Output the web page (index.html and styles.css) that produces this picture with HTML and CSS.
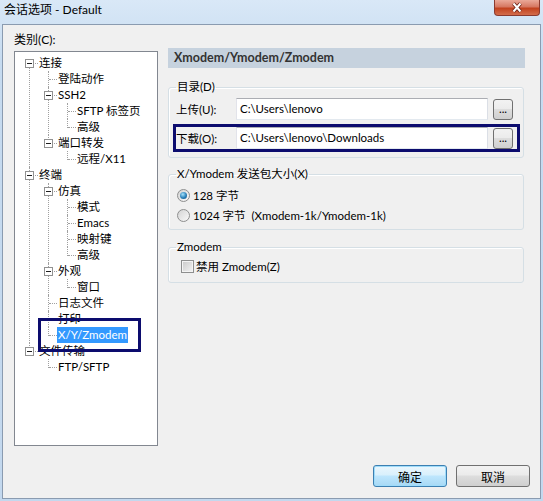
FILE: index.html
```html
<!DOCTYPE html>
<html lang="zh-CN">
<head>
    <meta charset="UTF-8">
    <title>会话选项 - Default</title>
    <link rel="stylesheet" href="styles.css">
</head>
<body>

    <div class="window">
        <div class="titlebar">
            <span class="title">会话选项 - Default</span>
            <button class="close" type="button">
                <svg width="14" height="11" viewBox="0 0 14 11">
                    <path d="M3.5 1.5 L10.5 9.5 M10.5 1.5 L3.5 9.5" stroke="#6b2216" stroke-width="3.6" fill="none"/>
                    <path d="M3.5 1.5 L10.5 9.5 M10.5 1.5 L3.5 9.5" stroke="#fff" stroke-width="2" fill="none"/>
                </svg>
            </button>
        </div>

        <div class="client">
            <div class="main">
                <div class="category">
                    <div class="cat-label">类别(C):</div>
                    <div class="tree">
                        <ul>
                            <li><span class="box"></span><div class="row"><span class="txt">连接</span></div>
                                <ul>
                                    <li><div class="row"><span class="txt">登陆动作</span></div></li>
                                    <li><span class="box"></span><div class="row"><span class="txt">SSH2</span></div>
                                        <ul>
                                            <li><div class="row"><span class="txt">SFTP 标签页</span></div></li>
                                            <li><div class="row"><span class="txt">高级</span></div></li>
                                        </ul>
                                    </li>
                                    <li><span class="box"></span><div class="row"><span class="txt">端口转发</span></div>
                                        <ul>
                                            <li><div class="row"><span class="txt">远程/X11</span></div></li>
                                        </ul>
                                    </li>
                                </ul>
                            </li>
                            <li><span class="box"></span><div class="row"><span class="txt">终端</span></div>
                                <ul>
                                    <li><span class="box"></span><div class="row"><span class="txt">仿真</span></div>
                                        <ul>
                                            <li><div class="row"><span class="txt">模式</span></div></li>
                                            <li><div class="row"><span class="txt">Emacs</span></div></li>
                                            <li><div class="row"><span class="txt">映射键</span></div></li>
                                            <li><div class="row"><span class="txt">高级</span></div></li>
                                        </ul>
                                    </li>
                                    <li><span class="box"></span><div class="row"><span class="txt">外观</span></div>
                                        <ul>
                                            <li><div class="row"><span class="txt">窗口</span></div></li>
                                        </ul>
                                    </li>
                                    <li><div class="row"><span class="txt">日志文件</span></div></li>
                                    <li><div class="row"><span class="txt">打印</span></div></li>
                                    <li><div class="row"><span class="txt sel">X/Y/Zmodem</span></div><span class="mark"></span></li>
                                </ul>
                            </li>
                            <li><span class="box"></span><div class="row"><span class="txt">文件传输</span></div>
                                <ul>
                                    <li><div class="row"><span class="txt">FTP/SFTP</span></div></li>
                                </ul>
                            </li>
                        </ul>
                    </div>
                </div>

                <div class="panel">
                    <div class="panel-head">Xmodem/Ymodem/Zmodem</div>

                    <fieldset class="group g1">
                        <legend>目录(D)</legend>
                        <div class="dir-row">
                            <span class="dir-label">上传(U):</span>
                            <div class="path">C:\Users\lenovo</div>
                            <button class="browse" type="button">...</button>
                        </div>
                        <div class="dir-row">
                            <span class="dir-label">下载(O):</span>
                            <div class="path">C:\Users\lenovo\Downloads</div>
                            <button class="browse" type="button">...</button>
                            <span class="mark mark-row"></span>
                        </div>
                    </fieldset>

                    <fieldset class="group g2">
                        <legend>X/Ymodem 发送包大小(X)</legend>
                        <div class="opt"><span class="radio on"></span>128 字节</div>
                        <div class="opt"><span class="radio"></span>1024 字节&nbsp;&nbsp;(Xmodem-1k/Ymodem-1k)</div>
                    </fieldset>

                    <fieldset class="group g3">
                        <legend>Zmodem</legend>
                        <div class="opt"><span class="check"></span>禁用 Zmodem(Z)</div>
                    </fieldset>
                </div>
            </div>

            <div class="footer">
                <button class="btn default" type="button">确定</button>
                <button class="btn" type="button">取消</button>
            </div>
        </div>
    </div>

</body>
</html>
```

FILE: styles.css
```css
* {
    box-sizing: border-box;
}
body {
    margin: 0;
    font-family: Lato, "Noto Sans CJK SC", sans-serif;
    font-size: 11.5px;
    color: #000;
}
button {
    font: inherit;
    color: #000;
}
.window {
    width: 543px;
    height: 501px;
    display: flex;
    flex-direction: column;
    background: linear-gradient(#d9e8f7, #c6dbf0 60px, #c3d8ee);
    overflow: hidden;
}
.titlebar {
    height: 24px;
    display: flex;
    align-items: flex-start;
}
.title {
    padding: 2px 0 0 4px;
    line-height: 16px;
    font-size: 12px;
}
.close {
    margin-left: auto;
    margin-right: 3px;
    width: 46px;
    height: 16px;
    padding: 0;
    border: 1px solid #8b3a2f;
    border-top: none;
    border-radius: 0 0 4px 4px;
    background: linear-gradient(#eaa999, #d67862 45%, #c2421f 55%, #d36d4c);
    display: flex;
    align-items: center;
    justify-content: center;
}
.client {
    flex: 1;
    margin: 0 2px 2px 2px;
    border: 1px solid #8a9bb0;
    background: #f0f0f0;
    display: flex;
    flex-direction: column;
}
.main {
    flex: 1;
    display: flex;
    padding: 7px 0 0 11px;
}
.category {
    width: 144px;
}
.cat-label {
    line-height: 16px;
    font-size: 12px;
}

/* tree view */
.tree {
    position: relative;
    margin-top: 3px;
    height: 395px;
    border: 1px solid #828790;
    background: #fff;
    padding-top: 3px;
    overflow: hidden;
}
.tree ul {
    list-style: none;
    margin: 0;
    padding: 0;
}
.tree ul ul {
    margin-left: -4px;
}
.tree li {
    position: relative;
    padding-left: 23px;
}
.tree li::before {
    content: "";
    position: absolute;
    left: 14px;
    top: 0;
    bottom: 0;
    border-left: 1px dotted #a0a0a0;
}
.tree li:last-child::before {
    bottom: auto;
    height: 9px;
}
.tree > ul > li:first-child::before {
    top: 8px;
}
.tree li::after {
    content: "";
    position: absolute;
    left: 15px;
    top: 8px;
    width: 8px;
    border-top: 1px dotted #a0a0a0;
}
.row {
    height: 16px;
    line-height: 16px;
    white-space: nowrap;
}
.txt {
    display: inline-block;
    height: 16px;
    padding: 0 1px;
}
.txt.sel {
    background: #3399ff;
    color: #fff;
}
.box {
    position: absolute;
    left: 10px;
    top: 4px;
    width: 9px;
    height: 9px;
    border: 1px solid #919191;
    background: #fff;
    z-index: 1;
}
.box::after {
    content: "";
    position: absolute;
    left: 1px;
    top: 3px;
    width: 5px;
    height: 1px;
    background: #1e1e1e;
}
.mark {
    position: absolute;
    left: 4px;
    top: -9px;
    width: 103px;
    height: 34px;
    border: 3px solid #0c0c6e;
    z-index: 2;
}

/* right panel */
.panel {
    width: 357px;
    margin-left: 10px;
    padding-top: 16px;
}
.panel-head {
    height: 20px;
    line-height: 20px;
    padding-left: 6px;
    background: #c6d2de;
    color: #333;
    font-weight: bold;
    font-size: 12.5px;
}
.group {
    width: 356px;
    margin: 0;
    border: 1px solid #d5dfe5;
    border-radius: 3px;
    box-shadow: inset 1px 1px 0 #fff;
}
.group legend {
    padding: 0 1px;
    line-height: 16px;
}
.g1 {
    margin-top: 11px;
    padding: 3px 7px 8px;
}
.g2 {
    margin-top: 8px;
    padding: 3px 7px 4px;
}
.g3 {
    margin-top: 9px;
    padding: 1px 7px 6px;
}
.dir-row {
    position: relative;
    display: flex;
    align-items: center;
    height: 22px;
}
.dir-row + .dir-row {
    margin-top: 7px;
}
.dir-label {
    width: 60px;
}
.path {
    width: 252px;
    height: 22px;
    line-height: 20px;
    padding-left: 3px;
    background: #fff;
    border: 1px solid;
    border-color: #abadb3 #dbdfe6 #e3e9ef #e2e3ea;
}
.browse {
    margin-left: 5px;
    width: 20px;
    height: 21px;
    padding: 0;
    line-height: 14px;
    border: 1px solid #707070;
    border-radius: 3px;
    background: linear-gradient(#f2f2f2, #ebebeb 50%, #dddddd 50%, #cfcfcf);
}
.mark-row {
    left: -3px;
    top: -3px;
    width: 347px;
    height: 28px;
}
.opt {
    display: flex;
    align-items: center;
    height: 20px;
}
.radio {
    position: relative;
    width: 13px;
    height: 13px;
    margin: 0 3px 0 1px;
    border-radius: 50%;
    border: 1px solid #8e8f8f;
    background: linear-gradient(135deg, #d4d4d4, #f9f9f9);
}
.radio.on::after {
    content: "";
    position: absolute;
    left: 2px;
    top: 2px;
    width: 7px;
    height: 7px;
    border-radius: 50%;
    background: radial-gradient(circle at 40% 35%, #a6e2fb, #2a80b9 55%, #10507f);
}
.check {
    width: 13px;
    height: 13px;
    margin: 0 2px 0 5px;
    border: 1px solid #8e8f8f;
    background: linear-gradient(135deg, #c9c9c9, #f4f4f4);
    box-shadow: inset 0 0 0 1px #f4f4f4;
}

.footer {
    display: flex;
    justify-content: flex-end;
    gap: 9px;
    padding: 0 10px 11px 0;
}
.btn {
    width: 74px;
    height: 22px;
    padding: 0;
    border: 1px solid #707070;
    border-radius: 3px;
    background: linear-gradient(#f2f2f2, #ebebeb 45%, #dddddd 50%, #cfcfcf);
    font-size: 12px;
}
.btn.default {
    border-color: #3c7fb1;
    background: linear-gradient(#eaf6fd, #d9f0fc 45%, #bee6fd 50%, #a7d9f5);
    box-shadow: inset 0 0 0 1px #9fdcfa;
}
```
